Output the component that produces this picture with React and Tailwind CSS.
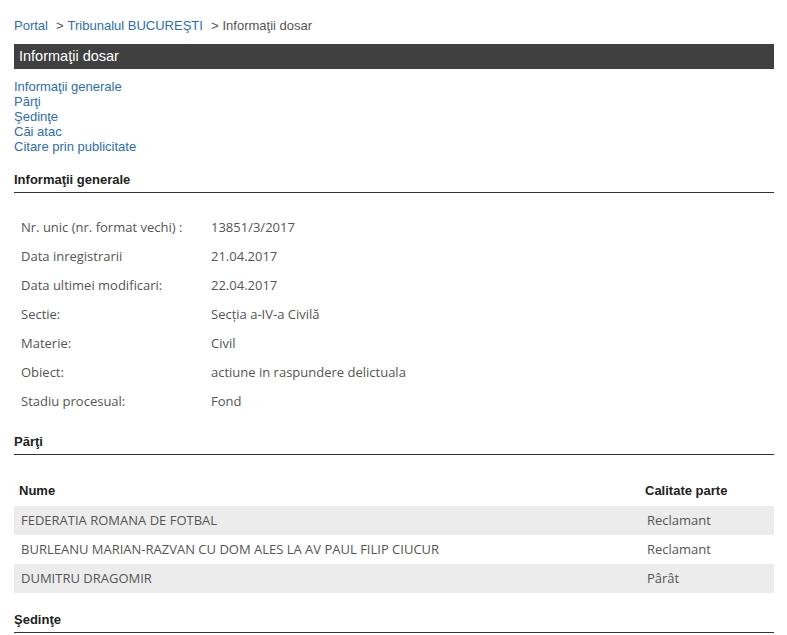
import React from "react";

const info = [
  ["Nr. unic (nr. format vechi) :", "13851/3/2017"],
  ["Data inregistrarii", "21.04.2017"],
  ["Data ultimei modificari:", "22.04.2017"],
  ["Sectie:", "Secția a-IV-a Civilă"],
  ["Materie:", "Civil"],
  ["Obiect:", "actiune in raspundere delictuala"],
  ["Stadiu procesual:", "Fond"],
];

const parti = [
  ["FEDERATIA ROMANA DE FOTBAL", "Reclamant"],
  ["BURLEANU MARIAN-RAZVAN CU DOM ALES LA AV PAUL FILIP CIUCUR", "Reclamant"],
  ["DUMITRU DRAGOMIR", "Pârât"],
];

const arial = "font-['Liberation_Sans',Arial,sans-serif]";

export default function App() {
  return (
    <div className={`${arial} bg-white w-[787px] h-[635px] overflow-hidden px-[14px] pt-[17px]`}>
      <div className="w-[760px]">
        <div className="text-[13px] leading-[18px] text-[#555] flex">
          <a className="text-[#2a6ebb]">Portal</a>
          <span className="ml-[8px]">&gt;</span>
          <a className="text-[#2a6ebb] ml-[4px]">Tribunalul BUCUREŞTI</a>
          <span className="ml-[8px]">&gt;</span>
          <span className="ml-[4px]">Informaţii dosar</span>
        </div>
        <div className="mt-[9px] h-[25px] bg-[#404040] text-white text-[14.5px] leading-[25px] pl-[5px]">
          Informaţii dosar
        </div>
        <div className="mt-[10px] flex flex-col text-[13px] leading-[15px] text-[#2a6ebb]">
          <a>Informaţii generale</a>
          <a>Părţi</a>
          <a>Şedinţe</a>
          <a>Căi atac</a>
          <a>Citare prin publicitate</a>
        </div>
        <div className="mt-[18px] text-[13px] font-bold text-[#222] leading-[16px] pb-[4px] border-b border-[#333]">
          Informaţii generale
        </div>
        <div className="mt-[20px] font-['Open_Sans',sans-serif] text-[13px] text-[#555]">
          {info.map(([k, v]) => (
            <div key={k} className="flex h-[29px] items-center">
              <div className="w-[197px] pl-[7px]">{k}</div>
              <div>{v}</div>
            </div>
          ))}
        </div>
        <div className="mt-[18px] text-[13px] font-bold text-[#222] leading-[16px] pb-[4px] border-b border-[#333]">
          Părţi
        </div>
        <div className="mt-[28px] flex text-[13px] font-bold text-[#222] leading-[16px] pl-[5px] pb-[7px]">
          <div className="flex-1">Nume</div>
          <div className="w-[129px]">Calitate parte</div>
        </div>
        <div className="font-['Open_Sans',sans-serif] text-[13px] text-[#555]">
          {parti.map(([n, c], i) => (
            <div key={n} className={`flex h-[29px] items-center ${i % 2 === 0 ? "bg-[#ececec]" : ""}`}>
              <div className="flex-1 pl-[7px]">{n}</div>
              <div className="w-[127px]">{c}</div>
            </div>
          ))}
        </div>
        <div className="mt-[19px] text-[13px] font-bold text-[#222] leading-[16px] pb-[4px] border-b border-[#333]">
          Şedinţe
        </div>
      </div>
    </div>
  );
}
